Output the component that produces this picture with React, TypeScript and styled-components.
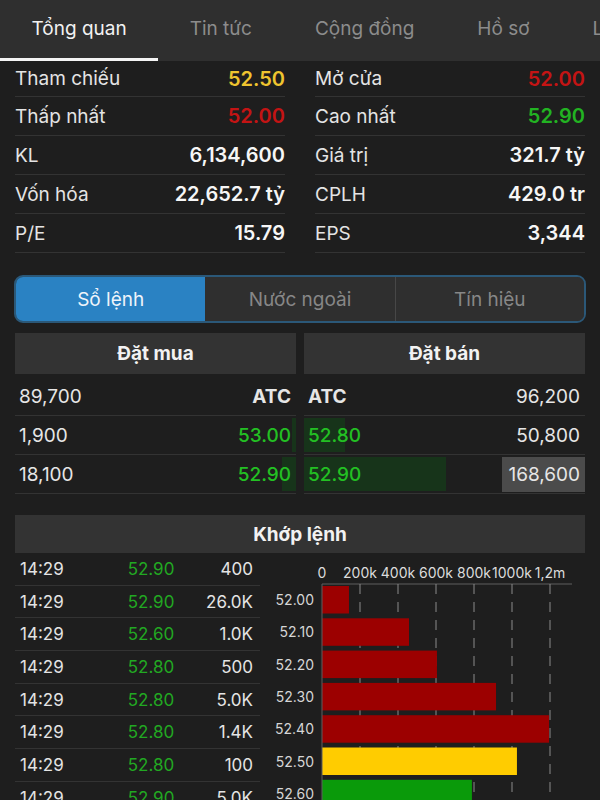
import React from "react";
import styled, { createGlobalStyle } from "styled-components";

const GlobalStyle = createGlobalStyle`
  html, body {
    margin: 0;
    padding: 0;
    overflow: hidden;
    background: #1e1e1e;
  }
  body {
    font-family: Inter, "Noto Sans", Roboto, sans-serif;
    color: #e6e6e6;
  }
`;

const Screen = styled.div`
  width: 600px;
  height: 800px;
  overflow: hidden;
  background: #1e1e1e;
`;

const TabBar = styled.div`
  display: flex;
  height: 61px;
  background: #2f2f2f;
  overflow: hidden;
  white-space: nowrap;
`;

const Tab = styled.div<{ $active?: boolean }>`
  flex: none;
  display: flex;
  align-items: center;
  box-sizing: border-box;
  padding: 0 31.5px 2px;
  height: 61px;
  font-size: 19px;
  color: ${(p) => (p.$active ? "#f2f2f2" : "#8c8c8c")};
  border-bottom: 3px solid ${(p) => (p.$active ? "#f4f4f4" : "transparent")};
`;

const StatsGrid = styled.div`
  display: grid;
  grid-template-columns: 1fr 1fr;
  column-gap: 30px;
  padding: 0 15px;
`;

const StatRow = styled.div`
  display: flex;
  align-items: center;
  justify-content: space-between;
  box-sizing: border-box;
  height: 39px;
  border-bottom: 1px solid #333;
  font-size: 19px;
  &:nth-child(-n + 2) {
    height: 36px;
  }
`;

const Label = styled.span`
  color: #e4e4e4;
`;

const Value = styled.span<{ $color?: string }>`
  font-size: 20px;
  font-weight: 600;
  color: ${(p) => p.$color || "#f6f6f6"};
`;

const Segmented = styled.div`
  display: grid;
  grid-template-columns: repeat(3, 1fr);
  margin: 22px 14px 0;
  height: 48px;
  box-sizing: border-box;
  border: 2px solid #2b5878;
  border-radius: 9px;
  overflow: hidden;
  background: #2f2f2f;
`;

const Segment = styled.div<{ $active?: boolean; $sep?: boolean }>`
  display: flex;
  align-items: center;
  justify-content: center;
  font-size: 19px;
  background: ${(p) => (p.$active ? "#2a82c3" : "#2f2f2f")};
  color: ${(p) => (p.$active ? "#eef4fa" : "#878787")};
  border-left: ${(p) => (p.$sep ? "1px solid #474747" : "none")};
`;

const HeadPair = styled.div`
  display: grid;
  grid-template-columns: 1fr 1fr;
  column-gap: 8px;
  margin: 10px 15px 0;
`;

const HeadBox = styled.div`
  display: flex;
  align-items: center;
  justify-content: center;
  height: 41px;
  background: #333333;
  font-size: 19px;
  font-weight: 700;
  color: #f2f2f2;
`;

const Book = styled.div`
  display: grid;
  grid-template-columns: 1fr 1fr;
  column-gap: 8px;
  margin: 3px 15px 0;
`;

const BookRow = styled.div`
  position: relative;
  display: flex;
  align-items: center;
  justify-content: space-between;
  box-sizing: border-box;
  height: 39px;
  padding: 0 5px 0 4px;
  border-bottom: 1px solid #333;
  font-size: 19px;
`;

const DepthBar = styled.div<{ $side: "left" | "right" }>`
  position: absolute;
  top: 2px;
  bottom: 2px;
  ${(p) => (p.$side === "left" ? "right: 0;" : "left: 0;")}
  background: #17341a;
`;

const Cell = styled.span<{ $kind?: "vol" | "price" | "atc"; $hl?: boolean }>`
  position: relative;
  color: ${(p) => (p.$kind === "price" ? "#23c023" : "#e6e6e6")};
  font-weight: ${(p) => (p.$kind === "atc" ? 700 : p.$kind === "price" ? 500 : 400)};
  ${(p) =>
    p.$hl
      ? `background: #4b4b4b; margin-right: -5px; padding: 0 5px 0 6px; height: 35px; display: flex; align-items: center;`
      : ""}
`;

const MatchHead = styled(HeadBox)`
  margin: 21px 15px 0;
  height: 38px;
`;

const Bottom = styled.div`
  display: grid;
  grid-template-columns: 245px 315px;
  column-gap: 10px;
  margin-left: 15px;
`;

const TradeList = styled.div`
  display: flex;
  flex-direction: column;
`;

const TradeRow = styled.div`
  display: grid;
  grid-template-columns: 92px 78px 1fr;
  align-items: center;
  box-sizing: border-box;
  height: 32.7px;
  padding: 0 7px 0 5px;
  border-bottom: 1px solid #333;
  font-size: 17px;
  flex: none;
`;

const TCell = styled.span<{ $align: string; $green?: boolean }>`
  text-align: ${(p) => p.$align};
  color: ${(p) => (p.$green ? "#22a822" : "#e4e4e4")};
`;

const ChartBox = styled.div`
  width: 315px;
`;

const tabs = ["Tổng quan", "Tin tức", "Cộng đồng", "Hồ sơ", "Lịch sử"];

const YELLOW = "#efc42f";
const RED = "#c41414";
const GREEN = "#22b322";

const stats: [string, string, string?][][] = [
  [["Tham chiếu", "52.50", YELLOW], ["Mở cửa", "52.00", RED]],
  [["Thấp nhất", "52.00", RED], ["Cao nhất", "52.90", GREEN]],
  [["KL", "6,134,600"], ["Giá trị", "321.7 tỷ"]],
  [["Vốn hóa", "22,652.7 tỷ"], ["CPLH", "429.0 tr"]],
  [["P/E", "15.79"], ["EPS", "3,344"]],
];

const buys = [
  { vol: "89,700", price: "ATC", bar: 0 },
  { vol: "1,900", price: "53.00", bar: 4 },
  { vol: "18,100", price: "52.90", bar: 14 },
];

const sells = [
  { vol: "96,200", price: "ATC", bar: 0 },
  { vol: "50,800", price: "52.80", bar: 41 },
  { vol: "168,600", price: "52.90", bar: 142, hl: true },
];

const trades = [
  ["14:29", "52.90", "400"],
  ["14:29", "52.90", "26.0K"],
  ["14:29", "52.60", "1.0K"],
  ["14:29", "52.80", "500"],
  ["14:29", "52.80", "5.0K"],
  ["14:29", "52.80", "1.4K"],
  ["14:29", "52.80", "100"],
  ["14:29", "52.90", "5.0K"],
  ["14:29", "52.90", "2.0K"],
];

const volumes = [
  { p: "52.00", v: 142, c: "#9c0000" },
  { p: "52.10", v: 458, c: "#9c0000" },
  { p: "52.20", v: 605, c: "#9c0000" },
  { p: "52.30", v: 916, c: "#9c0000" },
  { p: "52.40", v: 1195, c: "#9c0000" },
  { p: "52.50", v: 1026, c: "#ffcc00" },
  { p: "52.60", v: 789, c: "#0a9a0a" },
  { p: "52.70", v: 520, c: "#0a9a0a" },
];

const VolumeChart = () => {
  const x0 = 52;
  const perK = 38 / 200;
  const top = 33;
  const pitch = 32.3;
  const ticks = ["0", "200k", "400k", "600k", "800k", "1000k", "1,2m"];
  const h = 290;
  return (
    <svg width="315" height={h} viewBox={`0 0 315 ${h}`}>
      {ticks.map((t, i) => (
        <text
          key={t}
          x={x0 + i * 38}
          y={25}
          fontSize="14"
          fill="#dcdcdc"
          textAnchor="middle"
          fontFamily="Inter, sans-serif"
        >
          {t}
        </text>
      ))}
      <line x1={x0} y1={31} x2={302} y2={31} stroke="#5e5e5e" strokeWidth="1" />
      {ticks.slice(1).map((t, i) => (
        <line
          key={t}
          x1={x0 + (i + 1) * 38}
          y1={31}
          x2={x0 + (i + 1) * 38}
          y2={h}
          stroke="#8a8a8a"
          strokeWidth="1"
          strokeDasharray="10 8"
        />
      ))}
      {volumes.map((b, i) => {
        const y = top + i * pitch;
        return (
          <g key={b.p}>
            <rect x={x0} y={y} width={b.v * perK} height={27.5} fill={b.c} />
            <text
              x={44}
              y={y + 19}
              fontSize="14"
              fill="#d6d6d6"
              textAnchor="end"
              fontFamily="Inter, sans-serif"
            >
              {b.p}
            </text>
          </g>
        );
      })}
      <line x1={x0} y1={31} x2={x0} y2={h} stroke="#5e5e5e" strokeWidth="1" />
    </svg>
  );
};

export default function App() {
  return (
    <Screen>
      <GlobalStyle />
      <TabBar>
        {tabs.map((t, i) => (
          <Tab key={t} $active={i === 0}>
            {t}
          </Tab>
        ))}
      </TabBar>

      <StatsGrid>
        {stats.flatMap((pair) =>
          pair.map(([label, value, color]) => (
            <StatRow key={label}>
              <Label>{label}</Label>
              <Value $color={color}>{value}</Value>
            </StatRow>
          ))
        )}
      </StatsGrid>

      <Segmented>
        <Segment $active>Sổ lệnh</Segment>
        <Segment>Nước ngoài</Segment>
        <Segment $sep>Tín hiệu</Segment>
      </Segmented>

      <HeadPair>
        <HeadBox>Đặt mua</HeadBox>
        <HeadBox>Đặt bán</HeadBox>
      </HeadPair>

      <Book>
        <div>
          {buys.map((r) => (
            <BookRow key={r.vol}>
              {r.bar > 0 && <DepthBar $side="left" style={{ width: r.bar }} />}
              <Cell $kind="vol">{r.vol}</Cell>
              <Cell $kind={r.price === "ATC" ? "atc" : "price"}>{r.price}</Cell>
            </BookRow>
          ))}
        </div>
        <div>
          {sells.map((r) => (
            <BookRow key={r.vol}>
              {r.bar > 0 && <DepthBar $side="right" style={{ width: r.bar }} />}
              <Cell $kind={r.price === "ATC" ? "atc" : "price"}>{r.price}</Cell>
              <Cell $kind="vol" $hl={r.hl}>
                {r.vol}
              </Cell>
            </BookRow>
          ))}
        </div>
      </Book>

      <MatchHead>Khớp lệnh</MatchHead>

      <Bottom>
        <TradeList>
          {trades.map(([t, p, v], i) => (
            <TradeRow key={i}>
              <TCell $align="left">{t}</TCell>
              <TCell $align="center" $green>
                {p}
              </TCell>
              <TCell $align="right">{v}</TCell>
            </TradeRow>
          ))}
        </TradeList>
        <ChartBox>
          <VolumeChart />
        </ChartBox>
      </Bottom>
    </Screen>
  );
}
